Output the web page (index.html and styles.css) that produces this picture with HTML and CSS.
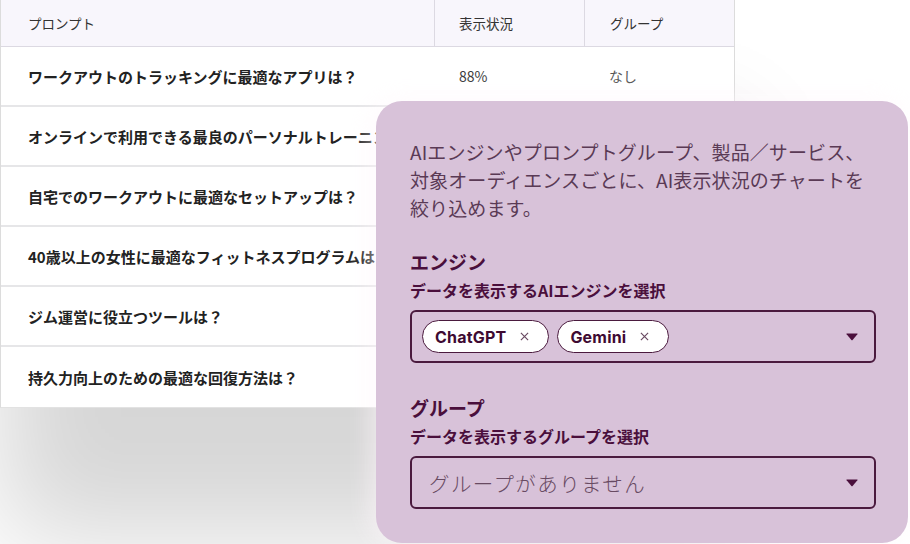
FILE: index.html
```html
<!DOCTYPE html>
<html lang="ja">
<head>
<meta charset="utf-8">
<link rel="stylesheet" href="styles.css">
</head>
<body>
<div class="stage">
  <div class="table">
    <div class="row head">
      <div class="cell c1">プロンプト</div>
      <div class="cell c2">表示状況</div>
      <div class="cell c3">グループ</div>
    </div>
    <div class="row">
      <div class="cell c1 q">ワークアウトのトラッキングに最適なアプリは？</div>
      <div class="cell c2">88%</div>
      <div class="cell c3">なし</div>
    </div>
    <div class="row">
      <div class="cell c1 q">オンラインで利用できる最良のパーソナルトレーニン</div>
      <div class="cell c2"></div>
      <div class="cell c3"></div>
    </div>
    <div class="row">
      <div class="cell c1 q">自宅でのワークアウトに最適なセットアップは？</div>
      <div class="cell c2"></div>
      <div class="cell c3"></div>
    </div>
    <div class="row">
      <div class="cell c1 q">40歳以上の女性に最適なフィットネスプログラムは</div>
      <div class="cell c2"></div>
      <div class="cell c3"></div>
    </div>
    <div class="row">
      <div class="cell c1 q">ジム運営に役立つツールは？</div>
      <div class="cell c2"></div>
      <div class="cell c3"></div>
    </div>
    <div class="row last">
      <div class="cell c1 q">持久力向上のための最適な回復方法は？</div>
      <div class="cell c2"></div>
      <div class="cell c3"></div>
    </div>
  </div>

  <div class="panel">
    <p class="desc">AIエンジンやプロンプトグループ、製品／サービス、対象オーディエンスごとに、AI表示状況のチャートを絞り込めます。</p>

    <div class="field first">
      <div class="label">エンジン</div>
      <div class="sublabel">データを表示するAIエンジンを選択</div>
      <div class="select">
        <div class="chips">
          <span class="chip">ChatGPT<svg class="x" viewBox="0 0 10 10"><path d="M1 1L9 9M9 1L1 9"/></svg></span>
          <span class="chip">Gemini<svg class="x" viewBox="0 0 10 10"><path d="M1 1L9 9M9 1L1 9"/></svg></span>
        </div>
        <svg class="caret" viewBox="0 0 12 8"><path d="M0.8 0.6H11.2Q11.9 0.6 11.4 1.2L6.6 6.9Q6 7.5 5.4 6.9L0.6 1.2Q0.1 0.6 0.8 0.6Z"/></svg>
      </div>
    </div>

    <div class="field">
      <div class="label">グループ</div>
      <div class="sublabel">データを表示するグループを選択</div>
      <div class="select">
        <span class="placeholder">グループがありません</span>
        <svg class="caret" viewBox="0 0 12 8"><path d="M0.8 0.6H11.2Q11.9 0.6 11.4 1.2L6.6 6.9Q6 7.5 5.4 6.9L0.6 1.2Q0.1 0.6 0.8 0.6Z"/></svg>
      </div>
    </div>
  </div>
</div>
</body>
</html>
```
FILE: styles.css
```css
* { box-sizing: border-box; }
html, body {
  margin: 0;
  padding: 0;
  background: #ffffff;
  width: 910px;
  height: 544px;
  overflow: hidden;
}
body {
  font-family: "Noto Sans CJK JP", "Noto Sans", sans-serif;
}
.stage {
  position: relative;
  width: 910px;
  height: 544px;
  overflow: hidden;
}
.table {
  width: 735px;
  background: #fff;
  border-left: 1px solid #dcdcdc;
  border-right: 1px solid #dcdcdc;
  border-bottom: 1px solid #e2e2e2;
  box-shadow: 0 130px 100px rgba(0, 0, 0, 0.16);
}
.row {
  display: grid;
  grid-template-columns: 433px 150px 150px;
  height: 60px;
  border-bottom: 2px solid #e6e6e8;
  background: #fff;
}
.row.last { border-bottom: none; height: 60px; }
.row.head {
  height: 47px;
  background: #f8f6fc;
  border-bottom: 1px solid #dcd9e2;
}
.cell {
  display: flex;
  align-items: center;
  padding-left: 25px;
  font-size: 14px;
  color: #3a3a3a;
  white-space: nowrap;
  overflow: hidden;
}
.c1 { padding-left: 27px; }
.head .cell { font-size: 13.5px; color: #333; }
.head .c2, .head .c3 { border-left: 1px solid #dcd9e2; }
.head .c2 { padding-left: 24px; }
.q {
  font-weight: 700;
  font-size: 15px;
  color: #222;
}
.c3 { padding-left: 25px; color: #555; }

.panel {
  position: absolute;
  left: 376px;
  top: 101px;
  width: 532px;
  height: 442px;
  background: #d8c2d9;
  border-radius: 26px;
  padding: 37px 32px 0 34px;
  box-shadow: -4px 0 24px 2px rgba(255, 246, 252, 0.6);
}
.desc {
  margin: 0;
  font-size: 19px;
  line-height: 28px;
  color: #5a3a55;
  letter-spacing: 0.1px;
}
.field { margin-top: 32px; }
.field.first { margin-top: 27px; }
.label {
  font-size: 19px;
  line-height: 26px;
  font-weight: 700;
  color: #4a0f3c;
}
.sublabel {
  margin-top: 4px;
  font-size: 16px;
  line-height: 22px;
  font-weight: 700;
  color: #4a0f3c;
}
.select {
  margin-top: 9px;
  width: 466px;
  height: 53px;
  border: 2px solid #4a1a3e;
  border-radius: 6px;
  display: flex;
  align-items: center;
  justify-content: space-between;
  padding: 0 16px 0 10px;
}
.chips { display: flex; gap: 8px; }
.chip {
  display: inline-flex;
  align-items: center;
  height: 33px;
  padding: 0 19px 0 12px;
  background: #fff;
  border: 1.5px solid #4a1a3e;
  border-radius: 17px;
  font-family: Inter, "Noto Sans", sans-serif;
  font-weight: 700;
  font-size: 16px;
  letter-spacing: 0.2px;
  color: #3e0a32;
}
.x {
  width: 9px;
  height: 9px;
  margin-left: 14px;
  fill: none;
  stroke: #6a4a62;
  stroke-width: 1.3;
}
.caret {
  width: 12px;
  height: 8px;
  fill: #4a0f3c;
}
.placeholder {
  padding-left: 7px;
  font-size: 20.5px;
  letter-spacing: 1.4px;
  color: #684a62;
  font-weight: 300;
}
```
